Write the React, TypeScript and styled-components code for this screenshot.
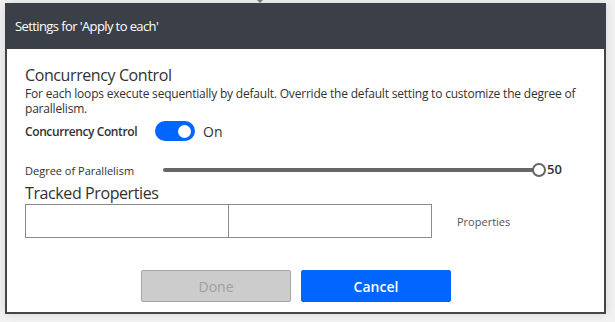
import React, { useState } from 'react';
import styled, { createGlobalStyle } from 'styled-components';

const GlobalStyle = createGlobalStyle`
  html, body {
    margin: 0;
    padding: 0;
    background: #f2f2f2;
  }
  body {
    font-family: 'Segoe UI', 'Open Sans', 'Noto Sans', sans-serif;
  }
`;

const Page = styled.div`
  position: relative;
  width: 615px;
  height: 322px;
  padding: 3px 9px 0 5px;
  box-sizing: border-box;

  &::before {
    content: '';
    position: absolute;
    left: 257px;
    top: 0;
    border-left: 3px solid transparent;
    border-right: 3px solid transparent;
    border-top: 3px solid #7a7a7a;
  }
`;

const Dialog = styled.div`
  width: 601px;
  height: 311px;
  box-sizing: border-box;
  background: #ffffff;
  border: 2px solid #454545;
  border-top: none;
  box-shadow: 0 0 10px rgba(0, 0, 0, 0.12);
  display: flex;
  flex-direction: column;
`;

const Header = styled.div`
  height: 46px;
  margin: 0 -2px;
  padding: 0 10px;
  background: #3b4048;
  color: #ffffff;
  font-size: 13px;
  letter-spacing: -0.6px;
  display: flex;
  align-items: center;
`;

const Body = styled.div`
  flex: 1;
  padding: 16px 10px 0 18px;
  display: flex;
  flex-direction: column;
  color: #323130;
`;

const SectionTitle = styled.div`
  font-size: 16px;
  line-height: 20px;
  letter-spacing: -0.4px;
`;

const Description = styled.div`
  font-size: 12px;
  line-height: 15px;
  margin-top: 1px;
  letter-spacing: -0.2px;
`;

const ToggleRow = styled.div`
  display: flex;
  align-items: center;
  margin-top: 4px;
  height: 22px;
`;

const FieldLabel = styled.div<{ $width?: number; $bold?: boolean; $size?: number }>`
  width: ${(p) => (p.$width ? `${p.$width}px` : 'auto')};
  flex-shrink: 0;
  font-size: ${(p) => p.$size ?? 12}px;
  font-weight: ${(p) => (p.$bold ? 600 : 400)};
  letter-spacing: ${(p) => (p.$bold ? '-0.4px' : '0')};
`;

const Toggle = styled.button<{ $on: boolean }>`
  width: 40px;
  height: 20px;
  border-radius: 10px;
  border: none;
  padding: 0;
  background: ${(p) => (p.$on ? '#0066ff' : '#c8c8c8')};
  display: flex;
  align-items: center;
  justify-content: ${(p) => (p.$on ? 'flex-end' : 'flex-start')};
  padding: 0 4px;
  box-sizing: border-box;
  cursor: pointer;
`;

const Knob = styled.span`
  width: 13px;
  height: 13px;
  border-radius: 50%;
  background: #ffffff;
`;

const ToggleText = styled.span`
  font-size: 14px;
  margin-left: 8px;
`;

const SliderRow = styled.div`
  display: flex;
  align-items: center;
  margin-top: 19px;
  height: 18px;
`;

const Track = styled.div`
  flex: 0 0 372px;
  height: 4px;
  border-radius: 2px;
  background: #666666;
`;

const Thumb = styled.div`
  width: 14px;
  height: 14px;
  box-sizing: border-box;
  border-radius: 50%;
  border: 2px solid #666666;
  background: #ffffff;
  margin-left: -3px;
`;

const SliderValue = styled.span`
  font-size: 13px;
  font-weight: 600;
  margin-left: 1px;
  margin-top: -3px;
`;

const TrackedTitle = styled(SectionTitle)`
  margin-top: 4px;
`;

const InputRow = styled.div`
  display: flex;
  align-items: center;
  margin-top: 1px;
`;

const TextBox = styled.input`
  width: 204px;
  height: 34px;
  box-sizing: border-box;
  border: 1px solid #8a8a8a;
  margin: 0;
  padding: 0 6px;
  outline: none;
  & + & {
    margin-left: -1px;
  }
`;

const SideLabel = styled.span`
  font-size: 11px;
  color: #555555;
  margin-left: 25px;
`;

const Footer = styled.div`
  display: flex;
  justify-content: center;
  gap: 10px;
  margin-top: auto;
  padding: 0 27px 10px 0;
`;

const Button = styled.button<{ $primary?: boolean }>`
  width: 150px;
  height: 32px;
  border-radius: 2px;
  font-family: inherit;
  font-size: 14px;
  font-weight: ${(p) => (p.$primary ? 600 : 400)};
  border: 1px solid ${(p) => (p.$primary ? '#0066ff' : '#a6a6a6')};
  background: ${(p) => (p.$primary ? '#0066ff' : '#cccccc')};
  color: ${(p) => (p.$primary ? '#ffffff' : '#a0a0a0')};
  cursor: ${(p) => (p.$primary ? 'pointer' : 'default')};
`;

const App: React.FC = () => {
  const [on, setOn] = useState<boolean>(true);

  return (
    <Page>
      <GlobalStyle />
      <Dialog>
        <Header>Settings for 'Apply to each'</Header>
        <Body>
          <SectionTitle>Concurrency Control</SectionTitle>
          <Description>
            For each loops execute sequentially by default. Override the default setting to customize the degree of
            parallelism.
          </Description>
          <ToggleRow>
            <FieldLabel $width={130} $bold>
              Concurrency Control
            </FieldLabel>
            <Toggle $on={on} onClick={() => setOn(!on)}>
              <Knob />
            </Toggle>
            <ToggleText>{on ? 'On' : 'Off'}</ToggleText>
          </ToggleRow>
          <SliderRow>
            <FieldLabel $width={138} $size={11}>
              Degree of Parallelism
            </FieldLabel>
            <Track />
            <Thumb />
            <SliderValue>50</SliderValue>
          </SliderRow>
          <TrackedTitle>Tracked Properties</TrackedTitle>
          <InputRow>
            <TextBox />
            <TextBox />
            <SideLabel>Properties</SideLabel>
          </InputRow>
          <Footer>
            <Button disabled>Done</Button>
            <Button $primary>Cancel</Button>
          </Footer>
        </Body>
      </Dialog>
    </Page>
  );
};

export default App;
